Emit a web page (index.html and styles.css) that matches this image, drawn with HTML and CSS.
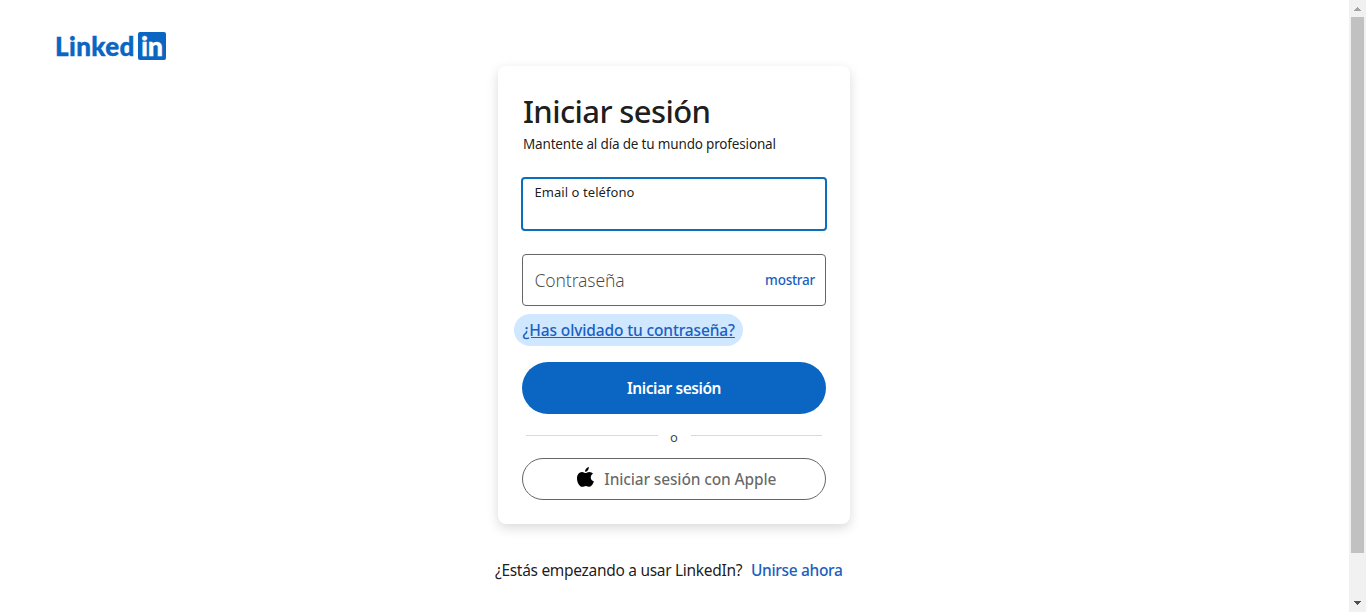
FILE: index.html
```html
<!DOCTYPE html>
<html lang="es">
<head>
<meta charset="utf-8">
<title>Iniciar sesión | LinkedIn</title>
<link rel="stylesheet" href="styles.css">
</head>
<body>
<div class="window">
  <div class="page">
    <header class="header">
      <a class="logo" aria-label="LinkedIn"><span class="logo-word">Linked</span><span class="logo-box">in</span></a>
    </header>
    <main class="card">
      <h1 class="title"><span>Iniciar sesión</span></h1>
      <p class="subtitle"><span>Mantente al día de tu mundo profesional</span></p>
      <div class="field field-active"><label class="label-small">Email o teléfono</label></div>
      <div class="field field-password"><label class="label-large">Contraseña</label><span class="show">mostrar</span></div>
      <a class="forgot"><span>¿Has olvidado tu contraseña?</span></a>
      <button class="submit"><span>Iniciar sesión</span></button>
      <div class="divider"><span>o</span></div>
      <button class="apple">
        <svg class="apple-icon" viewBox="0 0 17 20" width="17" height="20"><path d="M11.8 0c.15 1.300-.35 2.500-1.100 3.400-.8.950-1.700 1.500-2.600 1.400C8 3.600 8.500 2.500 9.300 1.600 10 .8 11 .2 11.800 0ZM8.600 6c.8 0 2-1.100 3.700-1.100 1.500 0 2.900.7 3.700 1.900-3.300 1.900-2.900 6.500.9 7.700-.6 1.800-2.400 5.200-4.400 5.300-1.400 0-1.900-.9-3.600-.9s-2.200.9-3.600.9C2.600 19.800 0 15.500 0 11.400 0 7.300 2.300 5 5 4.900 6.500 4.900 7.700 6 8.600 6Z"/></svg>
        <span>Iniciar sesión con Apple</span>
      </button>
    </main>
    <p class="join"><span class="join-text">¿Estás empezando a usar LinkedIn?</span><a class="join-link">Unirse ahora</a></p>
  </div>
  <div class="scrollbar">
    <svg class="arrow" viewBox="0 0 17 17" width="17" height="17"><path fill="#a3a3a3" d="M8 7h1v1h1v1h1v1h1v1H5v-1h1V9h1V8h1z"/></svg>
    <div class="thumb"></div>
    <svg class="arrow" viewBox="0 0 17 17" width="17" height="17"><path fill="#505050" d="M5 6h7v1h-1v1h-1v1H9v1H8V9H7V8H6V7H5z"/></svg>
  </div>
</div>
</body>
</html>
```
FILE: styles.css
```css
* { box-sizing: border-box; }
body {
  margin: 0;
  background: #fff;
  font-family: "Noto Sans", "Open Sans", sans-serif;
  color: rgba(0, 0, 0, 0.9);
  overflow: hidden;
}
.window { display: flex; height: 612px; }
.page { width: 1349px; display: flex; flex-direction: column; align-items: center; }
.header { width: 100%; height: 66px; padding: 32px 0 0 55px; }
.logo { display: flex; color: #0a66c2; font-family: Lato, sans-serif; font-weight: 900; }
.logo-word {
  width: 83px; font-size: 26px; line-height: 28px; white-space: nowrap;
  letter-spacing: 0.4px; -webkit-text-stroke: 0.4px #0a66c2;
}
.logo-box {
  width: 28px; height: 28px; border-radius: 2px; background: #0a66c2; color: #fff;
  font-size: 27px; line-height: 28px; text-align: center; letter-spacing: -0.2px;
  -webkit-text-stroke: 0.3px #fff;
}
.card {
  width: 352px; height: 458px; margin-left: -1px; padding: 24px; border-radius: 8px;
  background: #fff; box-shadow: 0 4px 12px rgba(0, 0, 0, 0.15);
  display: flex; flex-direction: column;
}
.title {
  margin: 0 0 0 1px; font-size: 31px; line-height: 42px; font-weight: 500;
  letter-spacing: -0.62px; white-space: nowrap;
}
.subtitle {
  margin: 2px 0 0 1px; font-size: 13.5px; line-height: 20px; font-weight: 400;
  letter-spacing: -0.17px; white-space: nowrap;
}
.field {
  height: 52px; border: 1px solid #666; border-radius: 4px;
  display: flex; padding: 0 10px 0 12px; flex-shrink: 0;
}
.field-active { margin: 23px -1px 0; height: 54px; border: 2px solid #0a6ebd; padding-left: 11.5px; }
.label-small { font-size: 13px; line-height: 18px; padding-top: 4px; font-weight: 400; letter-spacing: 0.06px; }
.field-password { margin-top: 23px; align-items: center; justify-content: space-between; padding-left: 11.5px; }
.label-large { font-size: 17.5px; font-weight: 300; letter-spacing: -0.12px; color: rgba(0, 0, 0, 0.72); }
.show { font-size: 13.5px; font-weight: 550; letter-spacing: -0.25px; color: #1b60bf; margin-top: -1px; }
.forgot {
  align-self: flex-start; height: 32px; width: 229px; margin: 8px 0 16px -8px; padding: 0 8px 0 8.5px;
  border-radius: 16px; background: #d0e8ff; color: #1b60bf; font-size: 15.5px;
  line-height: 32px; font-weight: 550; letter-spacing: -0.13px;
  text-decoration: underline; white-space: nowrap;
}
.submit {
  height: 52px; flex-shrink: 0; border: 0; border-radius: 26px; background: #0a66c2;
  color: #fff; font: 600 15.5px/52px "Noto Sans", sans-serif; padding: 0; letter-spacing: -0.45px;
}
.divider {
  height: 44px; padding: 0 4px 1px; display: flex; align-items: center; gap: 12px;
  font-size: 13px; line-height: 18px; color: rgba(0, 0, 0, 0.75);
}
.divider span { padding-top: 2px; width: 9px; text-align: center; }
.divider::before, .divider::after { content: ""; flex: 1; height: 1px; background: #d9d9d9; }
.apple {
  height: 42px; flex-shrink: 0; border: 1px solid #666; border-radius: 21px; background: #fff;
  color: rgba(0, 0, 0, 0.6); font: 500 15.5px/40px "Noto Sans", sans-serif; padding: 0 0 0 5px;
  display: flex; justify-content: center; gap: 10.5px; white-space: nowrap; letter-spacing: -0.14px;
}
.apple-icon { margin-top: 8px; fill: #000; }
.join { width: 348px; margin: 34px 0 0 -11px; font-size: 15.5px; line-height: 24px; display: flex; gap: 8px; white-space: nowrap; }
.join-text { width: 248px; font-weight: 400; letter-spacing: -0.3px; }
.join-link { color: #1b60bf; font-weight: 550; letter-spacing: -0.33px; }
.scrollbar { width: 17px; background: #f1f1f1; display: flex; flex-direction: column; }
.arrow { flex-shrink: 0; }
.thumb { height: 536px; margin: 0 2px 42px; background: #c1c1c1; }
```
